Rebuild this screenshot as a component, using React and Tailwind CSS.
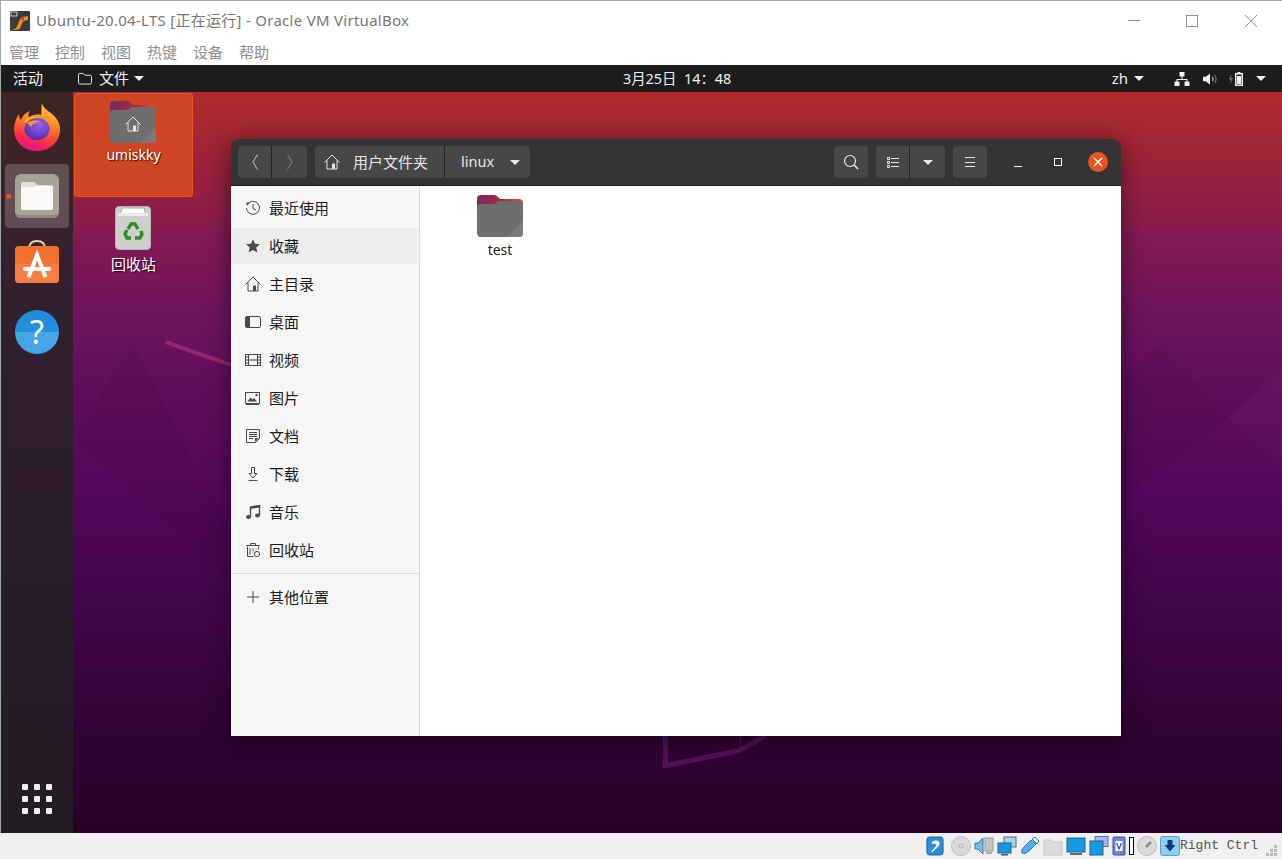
import { useId } from "react";

const sans = "font-['Noto_Sans','Noto_Sans_CJK_SC',sans-serif]";

function Folder({ className = "" }) {
  const id = useId();
  return (
    <svg viewBox="0 0 46 42" className={className}>
      <defs>
        <linearGradient id={id} x1="0" y1="0" x2="1" y2="0">
          <stop offset="0" stopColor="#7a2a63" />
          <stop offset="0.55" stopColor="#a62a3f" />
          <stop offset="1" stopColor="#e9541f" />
        </linearGradient>
      </defs>
      <path d="M0 4a4 4 0 0 1 4-4h13c2 0 3 1 4 2l2 2h19a4 4 0 0 1 4 4v10H0z" fill={`url(#${id})`} />
      <path d="M0 12c0-2 1-3 3-3h13c2 0 3-1 4-2 1-1 2-1 3-1h20c2 0 3 1 3 3v29c0 2-1 4-4 4H4c-3 0-4-2-4-4z" fill="#6e6e6e" />
      <path d="M46 26v12c0 2-1 4-4 4H30z" fill="#7a7a7a" />
    </svg>
  );
}

function Firefox() {
  const id = useId();
  return (
    <svg viewBox="0 0 46 48" className="h-[48px] w-[46px]">
      <defs>
        <linearGradient id={id + "a"} x1="0.7" y1="0" x2="0.4" y2="1">
          <stop offset="0" stopColor="#ffd53a" />
          <stop offset="0.45" stopColor="#ff7b1f" />
          <stop offset="0.8" stopColor="#f6274f" />
          <stop offset="1" stopColor="#e3148f" />
        </linearGradient>
        <radialGradient id={id + "b"} cx="0.6" cy="0.3" r="0.8">
          <stop offset="0" stopColor="#9a5cf0" />
          <stop offset="1" stopColor="#4a2aa8" />
        </radialGradient>
      </defs>
      <path d="M28 0c1 5 5 7 9 10 6 5 9 10 9 16 0 13-10 22-23 22S0 39 0 26c0-5 2-11 5-15 0 3 1 5 2 6 1-4 4-7 9-9-2 3-2 5-1 6 3-2 8-3 12-2 1-4 0-8 1-12z" fill={`url(#${id}a)`} />
      <path d="M10 18c4-4 10-5 16-3-4 0-7 1-9 3 4 0 6 2 7 2-3 1-5 3-4 5-3-1-6-3-10-7z" fill="#ffb02e" />
      <ellipse cx="23" cy="26" rx="12.5" ry="11" fill={`url(#${id}b)`} />
      <path d="M13 20c4-3 10-3 14-1-5 0-9 2-10 5-1-2-3-3-4-4z" fill="#ff9a24" />
    </svg>
  );
}

function FilesTile() {
  return (
    <svg viewBox="0 0 44 44" className="h-[44px] w-[44px]">
      <rect width="44" height="44" rx="6" fill="#a7a291" />
      <path d="M44 4v34a6 6 0 0 1-6 6H4z" fill="#aaa596" />
      <path d="M6 41h32a6 6 0 0 0 6-3v0a6 6 0 0 1-6 6H6a6 6 0 0 1-6-6v0a6 6 0 0 0 6 3z" fill="#8f8a7b" />
      <path d="M6 10a2 2 0 0 1 2-2h10c2 0 3 1 4 3H36a2 2 0 0 1 2 2v21a2 2 0 0 1-2 2H8a2 2 0 0 1-2-2z" fill="#e2dfd6" />
      <path d="M6 15c0-1 1-2 2-2h9c2 0 3-1 5-1h14a2 2 0 0 1 2 2v20a2 2 0 0 1-2 2H8a2 2 0 0 1-2-2z" fill="#faf9f7" />
    </svg>
  );
}

function Software() {
  return (
    <svg viewBox="0 0 44 44" className="h-[44px] w-[44px]">
      <path d="M14 9c0-5 3-8 8-8s8 3 8 8" fill="none" stroke="#e8c9a8" strokeWidth="2" />
      <path d="M0 10a4 4 0 0 1 4-4h36a4 4 0 0 1 4 4v29a4 4 0 0 1-4 4H4a4 4 0 0 1-4-4z" fill="#f4702e" />
      <path d="M0 24h44v15a4 4 0 0 1-4 4H4a4 4 0 0 1-4-4z" fill="#f87f42" />
      <path d="M13.500 37L22 15l8.500 22" fill="none" stroke="#fff" strokeWidth="4" />
      <rect x="8" y="27" width="28" height="4" rx="2" fill="#fff" />
    </svg>
  );
}

function Trash() {
  return (
    <svg viewBox="0 0 36 44" className="h-[44px] w-[36px]">
      <rect x="0" y="0" width="36" height="44" rx="5" fill="#cfcfcc" stroke="#9a9a98" />
      <path d="M5 9l2-7h22l2 7z" fill="#fff" stroke="#a5a5a5" />
      <rect x="3" y="7" width="30" height="3" fill="#e9e9e7" />
      <g fill="none" stroke="#2f8c23" strokeWidth="3.4">
        <path d="M13 23l3-5h4l3 5" />
        <path d="M26 25l1 3-2 4h-5" />
        <path d="M16 32h-4l-2-4 2-4" />
      </g>
    </svg>
  );
}

function VBoxLogo() {
  return (
    <svg viewBox="0 0 20 20" className="h-5 w-5">
      <rect width="20" height="20" rx="1" fill="#3a3a3e" />
      <path d="M2 19c4-1 5-3 6-6 1-3 2-6 5-7l5-1v4l-4 1c-2 1-2 3-3 5-1 3-3 4-6 4z" fill="#f08a1c" />
      <path d="M11 6l3-1 0 4-2 1z" fill="#d14a12" />
      <rect x="1" y="1" width="6" height="4" fill="none" stroke="#d8d8d8" strokeWidth="0.9" />
    </svg>
  );
}

// adwaita-ish symbolic icons, 16 box
function Sym({ name, className = "h-4 w-4" }) {
  const p = { fill: "none", stroke: "currentColor", strokeWidth: 1 };
  const shapes = {
    recent: (
      <>
        <path {...p} d="M2.600 4.200A6.500 6.500 0 1 1 1.500 8" />
        <path {...p} d="M8 4v4.500l3 1.500" />
        <path fill="currentColor" d="M1 2.500l4 .3-3 3z" />
      </>
    ),
    star: <path fill="currentColor" d="M8 1.200l2 4.600 5 .5-3.800 3.300 1.200 4.900L8 12l-4.400 2.500 1.200-4.900L1 6.300l5-.5z" />,
    home: (
      <>
        <path {...p} d="M.5 8.500L8 1l7.500 7.500" />
        <path {...p} d="M3 6.500v8.500h10V6.500" />
        <path fill="currentColor" d="M8 9.500h3v5.500H8z" />
      </>
    ),
    desktop: (
      <>
        <rect {...p} x="0.500" y="2.500" width="15" height="11" rx="1.500" />
        <path fill="currentColor" d="M1 3h4v10H1z" />
      </>
    ),
    video: (
      <>
        <rect {...p} x="0.500" y="2.500" width="15" height="11" />
        <path {...p} d="M3.500 2.500v11M12.500 2.500v11M3.500 8h9M0.500 5h3M0.500 8h3M0.500 11h3M12.500 5h3M12.500 8h3M12.500 11h3" />
      </>
    ),
    picture: (
      <>
        <rect {...p} x="0.500" y="2.500" width="14" height="11" />
        <path fill="currentColor" d="M1 13.500V15h13v-1.500zM2.500 11.500l3-4 2 2 1.500-1.500 3 3.500z" />
        <circle cx="11.500" cy="5" r="1.200" fill="currentColor" />
      </>
    ),
    doc: (
      <>
        <path {...p} d="M1.500 1.500h13v9l-4 4h-9z" />
        <path {...p} d="M4 4.500h8M4 6.500h8M4 8.500h8M4 10.500h4" />
        <path fill="currentColor" d="M10 14v-4h4z" />
      </>
    ),
    download: (
      <>
        <path {...p} d="M6.500 1.500h3v6h2.500L8 12 4 7.500h2.500z" />
        <path {...p} d="M3.500 14.500h9" />
      </>
    ),
    music: (
      <>
        <path {...p} strokeWidth="1.400" d="M5.500 12.500V3l9-1.500V11" />
        <path fill="currentColor" d="M5 2.800l10-1.600v2.300L5 5z" />
        <ellipse cx="3.500" cy="13" rx="2.500" ry="2" fill="currentColor" />
        <ellipse cx="12.500" cy="11.500" rx="2.500" ry="2" fill="currentColor" />
      </>
    ),
    trash: (
      <>
        <path {...p} d="M2.500 4.500v10h6M13.500 4.500v3M1 3.500h14M5.500 3V1.500h5V3" />
        <path {...p} d="M5 6.500v6M8 6.500v3M11 6.500v1" />
        <circle {...p} cx="12" cy="12" r="2.600" />
      </>
    ),
    plus: <path {...p} d="M8 2v12M2 8h12" />,
    back: <path {...p} d="M10.500 .5L6 8l4.500 7.500" />,
    forward: <path {...p} d="M5.500 .5L10 8l-4.500 7.500" />,
    search: (
      <>
        <circle {...p} strokeWidth="1.200" cx="7" cy="7" r="5.500" />
        <path stroke="currentColor" strokeWidth="1.600" d="M11 11l4 4" />
      </>
    ),
    list: (
      <>
        <path {...p} d="M2.500 3.500h2v2h-2zM2.500 7.500h2v2h-2zM2.500 11.500h2v2h-2z" />
        <path {...p} d="M6 4.500h8M6 8.500h8M6 12.500h8" />
      </>
    ),
    menu: <path {...p} d="M3 3.500h10M3 8.500h10M3 12.500h10" />,
  };
  return (
    <svg viewBox="0 0 16 16" className={className}>
      {shapes[name]}
    </svg>
  );
}

const Caret = ({ className = "" }) => (
  <span className={`inline-block h-0 w-0 border-x-[5px] border-t-[5px] border-x-transparent border-t-current ${className}`} />
);

const places = [
  ["recent", "最近使用"],
  ["star", "收藏", true],
  ["home", "主目录"],
  ["desktop", "桌面"],
  ["video", "视频"],
  ["picture", "图片"],
  ["doc", "文档"],
  ["download", "下载"],
  ["music", "音乐"],
  ["trash", "回收站"],
];

function PlaceRow({ icon, label, active }) {
  return (
    <div className={`flex items-center pl-[14px] ${active ? "my-px h-[36px] bg-[#ededed]" : "h-[38px]"}`}>
      <span className="w-[24px] text-[#4a4a4a]">
        <Sym name={icon} className="h-[16px] w-[16px]" />
      </span>
      <span className="text-[15px] text-[#1c1c1c]">{label}</span>
    </div>
  );
}

function FileWindow() {
  const btn = "bg-[#474747] rounded-[4px] flex items-center text-[#e8e8e8]";
  return (
    <div className="absolute left-[158px] top-[47px] flex h-[597px] w-[890px] flex-col overflow-hidden rounded-t-[8px] shadow-[0_4px_24px_rgba(0,0,0,0.5)]">
      <div className="flex h-[47px] shrink-0 items-center border-b border-[#1e1e1e] bg-[#343434] pl-[7px]">
        <div className={`${btn} h-[32px] w-[69px]`}>
          <span className="flex h-[32px] w-[34px] items-center justify-center border-r border-[#252525] text-[#c9c9c9]">
            <Sym name="back" className="h-[16px] w-[16px]" />
          </span>
          <span className="flex flex-1 justify-center text-[#808080]"><Sym name="forward" className="h-[16px] w-[16px]" /></span>
        </div>
        <div className={`${btn} ml-[8px] h-[32px] w-[215px]`}>
          <span className="pl-[9px]"><Sym name="home" className="h-[16px] w-[16px]" /></span>
          <span className="ml-[13px] text-[15px]">用户文件夹</span>
          <span className="ml-[16px] h-[32px] border-l border-[#252525]" />
          <span className="ml-[16px] text-[14.5px]">linux</span>
          <Caret className="ml-[16px]" />
        </div>
        <div className={`${btn} ml-[304px] h-[32px] w-[34px] justify-center`}>
          <Sym name="search" className="h-[16px] w-[16px]" />
        </div>
        <div className={`${btn} ml-[8px] h-[32px] w-[69px]`}>
          <span className="flex h-[32px] w-[34px] items-center justify-center border-r border-[#252525]">
            <Sym name="list" className="h-[16px] w-[16px]" />
          </span>
          <span className="flex flex-1 justify-center"><Caret /></span>
        </div>
        <div className={`${btn} ml-[8px] h-[32px] w-[34px] justify-center`}>
          <Sym name="menu" className="h-[16px] w-[16px]" />
        </div>
        <span className="ml-[27px] mt-[8px] h-px w-[8px] bg-white" />
        <span className="ml-[32px] h-[8px] w-[8px] border border-white" />
        <span className="ml-[26px] flex h-[20px] w-[20px] items-center justify-center rounded-full bg-[#e95420] text-white">
          <svg viewBox="0 0 10 10" className="h-[10px] w-[10px]"><path d="M1 1l8 8M9 1l-8 8" stroke="currentColor" strokeWidth="1.400" /></svg>
        </span>
      </div>
      <div className="flex min-h-0 flex-1">
        <div className="w-[189px] shrink-0 border-r border-[#dcdcdc] bg-[#f6f6f6] pt-[3px]">
          {places.map(([icon, label, active]) => (
            <PlaceRow key={label} icon={icon} label={label} active={active} />
          ))}
          <div className="mt-[4px] border-t border-[#dcdcdc]" />
          <div className="pt-[4px]">
            <PlaceRow icon="plus" label="其他位置" />
          </div>
        </div>
        <div className="flex-1 bg-white pl-[57px] pt-[9px]">
          <div className="flex w-[46px] flex-col items-center">
            <Folder className="h-[42px] w-[46px] shrink-0" />
            <span className="mt-px text-[14px] leading-[24px] text-[#222]">test</span>
          </div>
        </div>
      </div>
    </div>
  );
}

const labelShadow = "text-white [text-shadow:1px_1px_1px_rgba(0,0,0,0.8)]";

function Dock() {
  return (
    <div className="relative flex w-[72px] shrink-0 flex-col items-center bg-[#232323]/80 pt-[11px]">
      <Firefox />
      <div className="relative mt-[13px] flex h-[64px] w-[64px] items-center justify-center rounded-[4px] bg-white/20">
        <FilesTile />
      </div>
      <span className="absolute left-[5px] top-[102px] h-[5px] w-[5px] rounded-full bg-[#e95420]" />
      <div className="mt-[12px]"><Software /></div>
      <div className="mt-[26px] flex h-[44px] w-[44px] items-center justify-center rounded-full bg-[linear-gradient(180deg,#1f8ad8_0%,#2590dc_50%,#44a6e6_50%,#44a6e6_100%)] text-[32px] leading-none text-white">
        ?
      </div>
      <div className="mt-auto mb-[19px] grid grid-cols-3 gap-[6px]">
        {[...Array(9)].map((_, i) => (
          <span key={i} className="h-[6px] w-[6px] rounded-[1px] bg-[#f0eeee]" />
        ))}
      </div>
    </div>
  );
}

function Wallpaper() {
  return (
    <svg viewBox="0 92 1282 741" className="pointer-events-none absolute inset-0 h-full w-full">
      <path d="M131 340L73 440 230 580V533z" fill="#000" opacity="0.035" />
      <path d="M1161 342l67 76-107 82V380z" fill="#000" opacity="0.035" />
      <path d="M1282 371l-54 47 54 52z" fill="#fff" opacity="0.02" />
      <path d="M165 342l66 23" stroke="#93296e" strokeWidth="4" />
      <path d="M665 736v30l73-15 27-15" fill="none" stroke="#560f5c" strokeWidth="5" />
      <path d="M740 736v14" stroke="#560f5c" strokeWidth="1" />
    </svg>
  );
}

function TopPanel() {
  return (
    <div className="flex h-[27px] shrink-0 items-center bg-[#1c1c1c] text-[14px] text-[#f0f0f0]">
      <div className="flex w-[622px] shrink-0 items-center pl-[12px]">
        <span className="text-[15px]">活动</span>
        <svg viewBox="0 0 16 14" className="ml-[34px] h-[13px] w-[16px]">
          <path d="M1 3c0-1 .5-1.500 1.500-1.500h3.500L8 3.500h5.500c1 0 1.500.5 1.500 1.500v6.500c0 1-.5 1.500-1.500 1.500h-11C1.500 13 1 12.500 1 11.500z" fill="none" stroke="#f0f0f0" />
        </svg>
        <span className="ml-[6px] text-[15px]">文件</span>
        <Caret className="ml-[5px]" />
      </div>
      <span className="text-[14.4px]">3月25日&nbsp;&nbsp;14：48</span>
      <div className="ml-auto flex items-center pr-[16px]">
        <span className="text-[15px]">zh</span>
        <Caret className="ml-[6px]" />
        <svg viewBox="0 0 16 14" className="ml-[30px] h-[14px] w-[16px]" fill="#f0f0f0">
          <rect x="5.500" y="0" width="5" height="4.500" rx="0.500" />
          <rect x="0.500" y="9.500" width="5" height="4.500" rx="0.500" />
          <rect x="10.500" y="9.500" width="5" height="4.500" rx="0.500" />
          <path d="M7.500 4h1v3h5v3h-1V8h-9v2h-1V7h5z" />
        </svg>
        <svg viewBox="0 0 16 14" className="ml-[13px] h-[14px] w-[15px]">
          <path d="M0 4.500h3L7.500 1v12L3 9.500H0z" fill="#f0f0f0" />
          <path d="M10 4.500c1 1.500 1 3.500 0 5" stroke="#f0f0f0" fill="none" />
          <path d="M12.500 2.500c2 3 2 6 0 9" stroke="#888" fill="none" />
        </svg>
        <svg viewBox="0 0 16 16" className="ml-[10px] h-[16px] w-[16px]">
          <path d="M3.500 3L0.800 8.500H3L2 13l3-6H3z" fill="#777" />
          <rect x="7.500" y="2.500" width="7" height="12" fill="#f0f0f0" stroke="#f0f0f0" />
          <rect x="8.500" y="3.500" width="5" height="10" fill="#1c1c1c" />
          <rect x="9" y="5" width="4" height="8" fill="#f0f0f0" />
          <rect x="9.500" y="1" width="3" height="2" fill="#f0f0f0" />
        </svg>
        <Caret className="ml-[12px]" />
      </div>
    </div>
  );
}

function Desktop() {
  return (
    <div className="relative flex min-h-0 flex-1 bg-[linear-gradient(180deg,#b02c2c_0%,#9c2438_10%,#851a52_19%,#72155e_28%,#600e5c_40%,#52085a_55%,#42064a_70%,#330338_85%,#2a0125_100%)]">
      <Wallpaper />
      <Dock />
      <div className="relative flex-1">
        <div className="pt-px pl-px">
          <div className={`flex h-[104px] w-[119px] flex-col items-center rounded-[3px] border border-[#e95420] bg-[#cf4624] pt-[7px] ${labelShadow}`}>
            <div className="relative mr-[2px] h-[42px] w-[46px]">
              <Folder className="h-[42px] w-[46px]" />
              <span className="absolute left-[15px] top-[15px] text-[#e6e6e6]"><Sym name="home" className="h-[16px] w-[16px]" /></span>
            </div>
            <span className="text-[14px] leading-[24px]">umiskky</span>
          </div>
          <div className={`mt-[9px] flex w-[119px] flex-col items-center ${labelShadow}`}>
            <div className="mr-[2px]"><Trash /></div>
            <span className="mt-[2px] text-[15px] leading-[24px]">回收站</span>
          </div>
        </div>
        <FileWindow />
      </div>
    </div>
  );
}

function Hd() {
  return (
    <svg viewBox="0 0 20 22" className="h-[22px] w-[18px]">
      <rect x="1" y="1" width="18" height="20" rx="3" fill="#2b8fd8" stroke="#15609e" />
      <path d="M6 7c2-3 8-3 9 0 1 4-5 7-8 11l-1-1c2-3 6-5 5-8-1-1-3-1-4 0z" fill="#fff" />
    </svg>
  );
}

function StatusIcons() {
  return (
    <div className="flex items-center gap-[3px]">
      <Hd />
      <svg viewBox="0 0 20 20" className="ml-[4px] h-[20px] w-[20px]">
        <circle cx="10" cy="10" r="9.500" fill="#d9d9d9" stroke="#c0c0c0" />
        <circle cx="10" cy="10" r="2" fill="none" stroke="#b5b5b5" />
      </svg>
      <svg viewBox="0 0 20 20" className="h-[20px] w-[20px]">
        <path d="M1 7h3l5-5v16l-5-5H1z" fill="#74b9e8" stroke="#2b79b5" />
        <rect x="11" y="2" width="8" height="13" fill="#c5c5c5" stroke="#999" />
        <rect x="12" y="16" width="6" height="2" fill="#aaa" />
      </svg>
      <svg viewBox="0 0 20 20" className="h-[20px] w-[20px]">
        <rect x="7" y="1" width="12" height="10" fill="#9fd3f2" stroke="#666" />
        <rect x="1" y="7" width="13" height="10" fill="#159be4" stroke="#2a5d85" />
        <rect x="4" y="18" width="7" height="1.500" fill="#555" />
      </svg>
      <svg viewBox="0 0 20 20" className="h-[20px] w-[20px]">
        <path d="M2 17c-1-2 0-4 2-6l7-7 5 4-7 7c-2 2-5 3-7 2z" fill="#52b0ee" stroke="#2b79b5" />
        <path d="M12 3l3-2 4 4-2 3z" fill="#fff" stroke="#2b79b5" />
      </svg>
      <svg viewBox="0 0 20 20" className="h-[20px] w-[20px]">
        <path d="M1 4h7l2 2h9v13H1z" fill="#dcdcdc" stroke="#c8c8c8" />
      </svg>
      <svg viewBox="0 0 20 20" className="h-[20px] w-[20px]">
        <rect x="1" y="2" width="18" height="14" fill="#159be4" stroke="#23638f" />
        <rect x="4" y="17" width="12" height="2" fill="#666" />
      </svg>
      <svg viewBox="0 0 20 20" className="h-[20px] w-[20px]">
        <rect x="6" y="0.500" width="13" height="10" fill="#a9b7f0" stroke="#5a6db5" />
        <rect x="1" y="5" width="13" height="14" fill="#159be4" stroke="#2a5d85" />
      </svg>
      <svg viewBox="0 0 14 20" className="h-[20px] w-[14px]">
        <rect x="1" y="1" width="12" height="18" rx="1" fill="#6d83e0" stroke="#3c51a8" />
        <rect x="3.500" y="5" width="7" height="10" fill="#fff" />
        <path d="M4.500 7L7 13l2.500-6" fill="none" stroke="#3c51a8" strokeWidth="1.300" />
      </svg>
      <span className="h-[18px] w-[5px] border border-black bg-white" />
      <svg viewBox="0 0 20 20" className="h-[20px] w-[20px]">
        <circle cx="10" cy="10" r="9.500" fill="#dadada" stroke="#bbb" />
        <path d="M9 11l5-5" stroke="#8f8f8f" strokeWidth="2.500" />
      </svg>
      <svg viewBox="0 0 20 20" className="h-[20px] w-[20px]">
        <rect x="0.500" y="0.500" width="19" height="19" rx="2" fill="#8fcdf5" stroke="#5a9ed0" />
        <path d="M7.500 4h5v5h3L10 15.500 4.500 9h3z" fill="#123a7a" />
      </svg>
    </div>
  );
}

export default function App() {
  return (
    <div className={`flex h-[859px] w-[1282px] flex-col overflow-hidden bg-[#f0f0f0] ${sans}`}>
      {/* host window title */}
      <div className="flex h-[39px] shrink-0 items-center border-t border-l border-[#a0a8a8] bg-white pt-px pl-[9px] text-[#777]">
        <VBoxLogo />
        <span className="ml-[6px] text-[15px] tracking-[0.28px]">Ubuntu-20.04-LTS [正在运行] - Oracle VM VirtualBox</span>
        <div className="ml-auto flex items-center pr-[25px]">
          <span className="h-px w-[12px] bg-[#909090]" />
          <span className="ml-[46px] h-[12px] w-[12px] border border-[#909090]" />
          <svg viewBox="0 0 12 12" className="ml-[47px] h-[12px] w-[12px]">
            <path d="M0 0l12 12M12 0L0 12" stroke="#909090" />
          </svg>
        </div>
      </div>
      <div className="flex h-[26px] shrink-0 items-center gap-[16px] border-l border-[#a0a8a8] bg-white pl-[8px] text-[15px] text-[#8e8e8e]">
        {["管理", "控制", "视图", "热键", "设备", "帮助"].map((m) => (
          <span key={m}>{m}</span>
        ))}
      </div>
      {/* guest screen */}
      <div className="flex min-h-0 flex-1 flex-col border-l border-[#a0a8a8]">
        <TopPanel />
        <Desktop />
      </div>
      {/* host status bar */}
      <div className="flex h-[26px] shrink-0 items-center bg-[#f0f0f0] pl-[926px]">
        <StatusIcons />
        <span className="font-['Liberation_Mono',monospace] text-[13px] text-[#555]">Right Ctrl</span>
        <span className="ml-[8px] mt-[8px] grid grid-cols-3 gap-[1px]">
          {[0, 0, 1, 0, 1, 1, 1, 1, 1].map((v, i) => (
            <span key={i} className={`h-[3px] w-[3px] ${v ? "bg-[#b9b9b9]" : ""}`} />
          ))}
        </span>
      </div>
    </div>
  );
}
